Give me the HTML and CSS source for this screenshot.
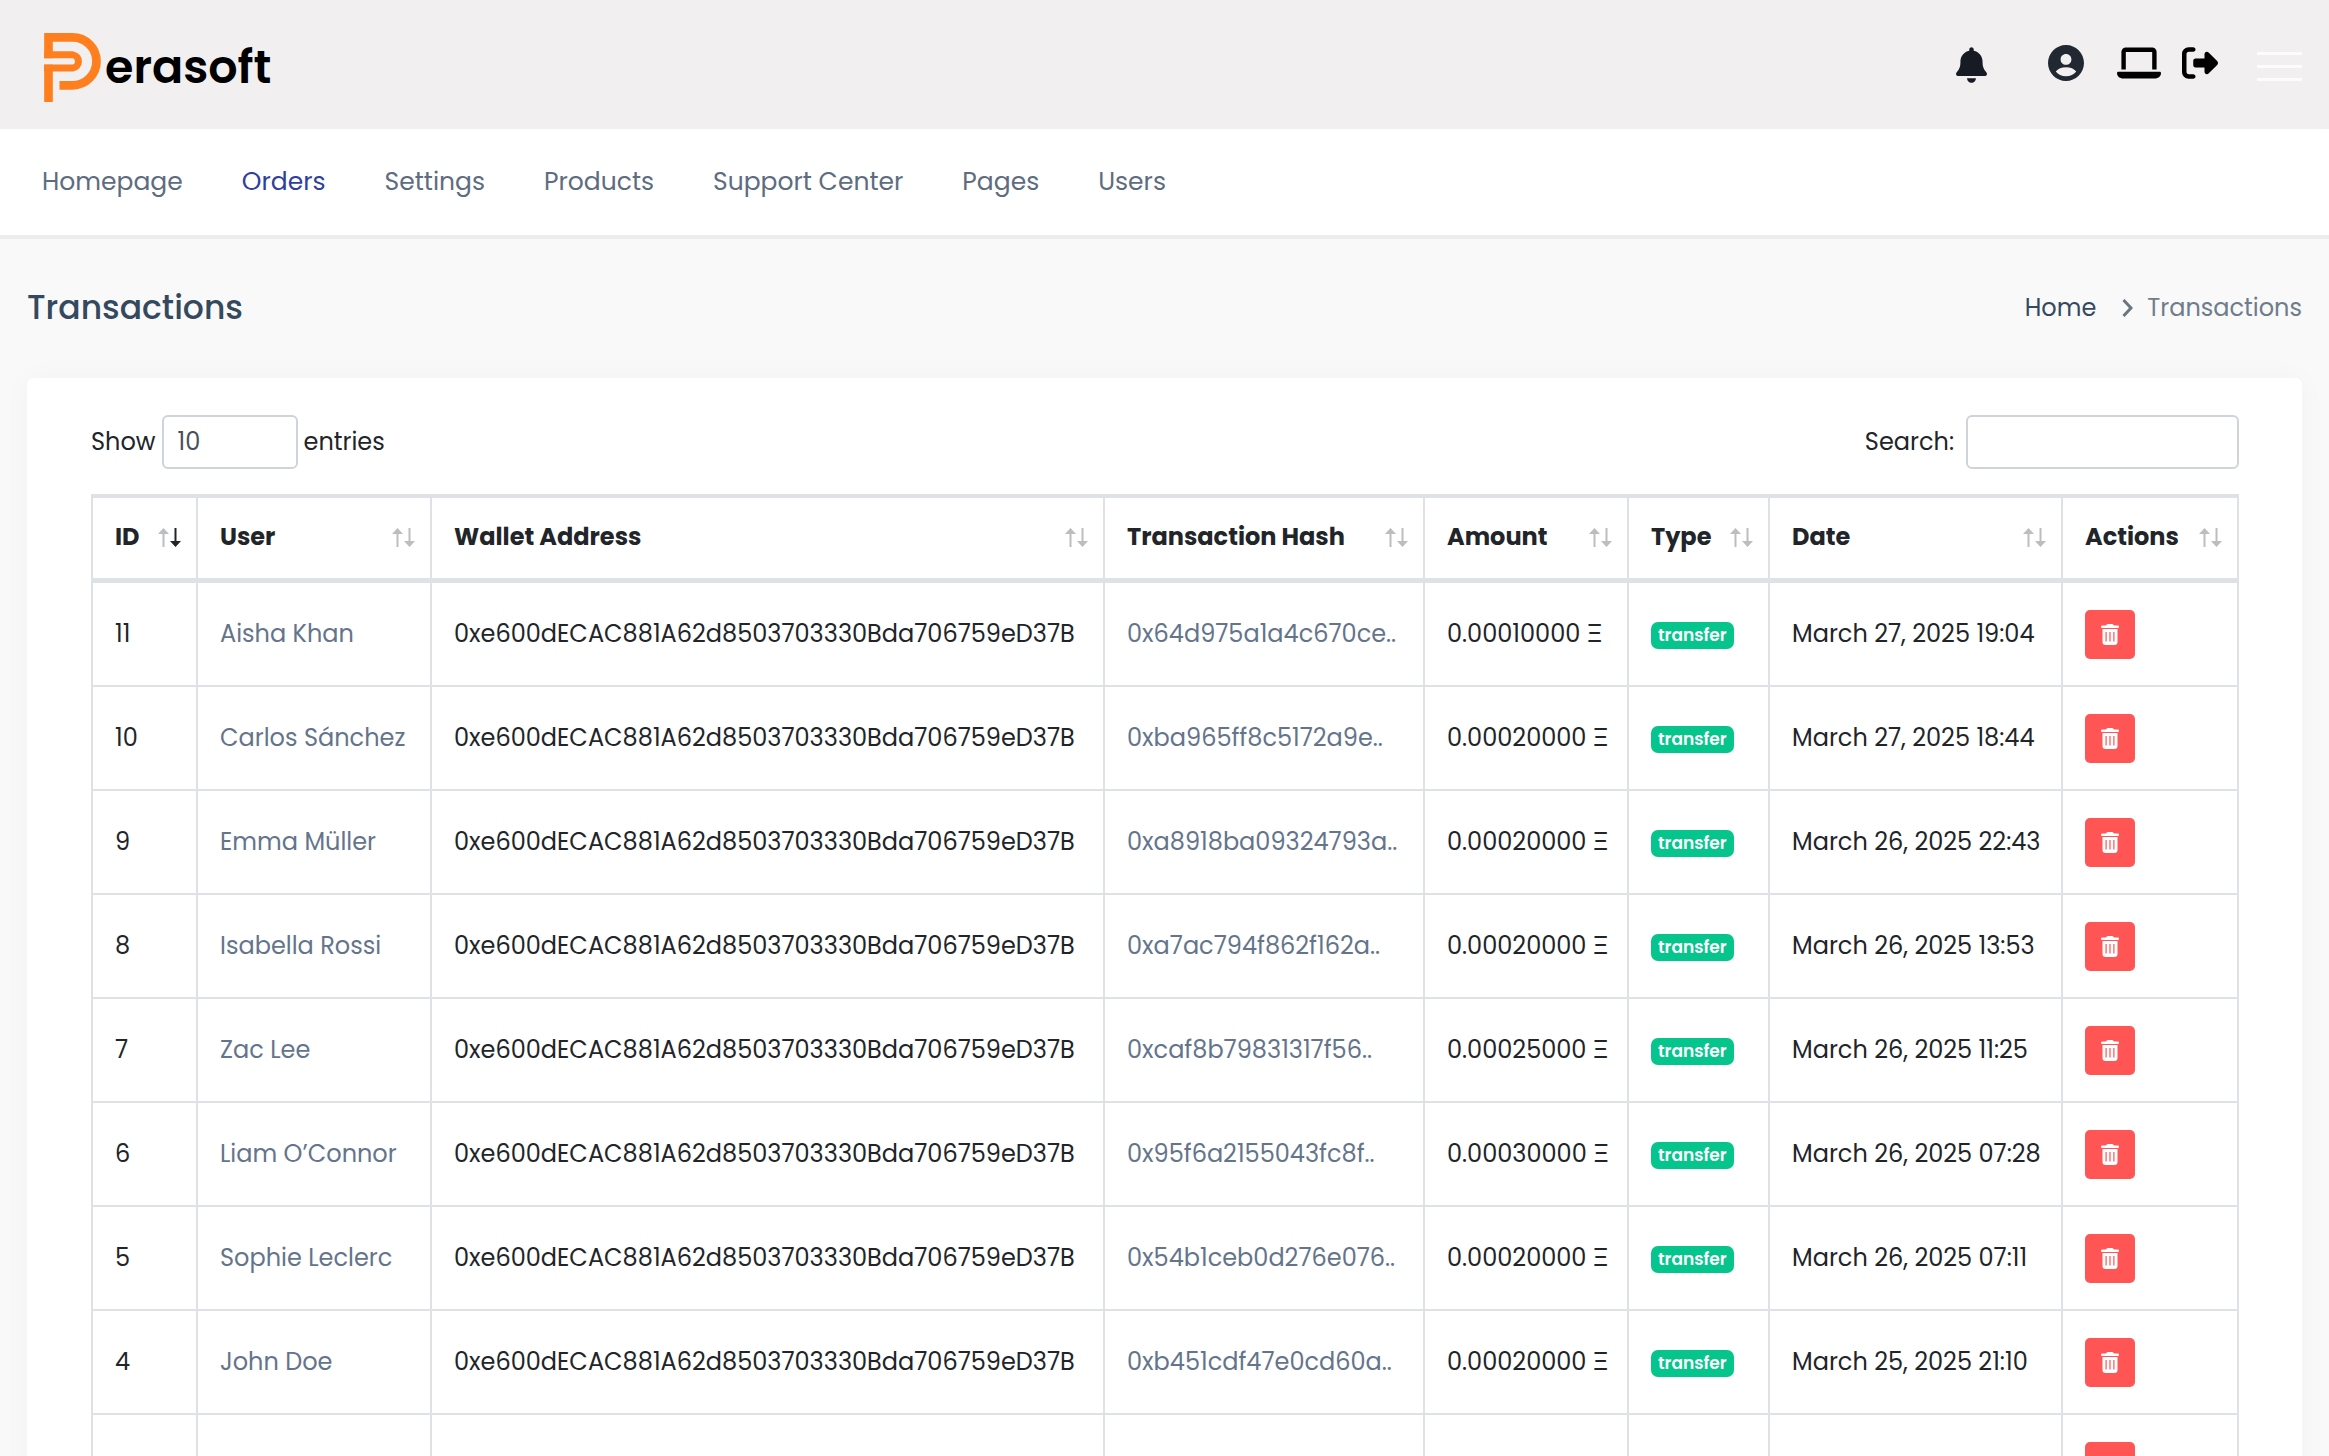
FILE: index.html
```html
<!DOCTYPE html>
<html lang="en">
<head>
<meta charset="utf-8">
<meta name="viewport" content="width=device-width, initial-scale=1">
<title>Transactions - Perasoft</title>
<link rel="stylesheet" href="styles.css">
</head>
<body>
<svg class="sprite" aria-hidden="true">
  <symbol id="trash" viewBox="0 0 18 21">
    <path fill-rule="evenodd" d="M5 1.500Q5.500 0 7 0H11Q12.500 0 13 1.500H17Q18 1.500 18 2.800T17 4H1Q0 4 0 2.800T1 1.500ZM1.500 5H16.500V18Q16.500 21 13.500 21H4.500Q1.500 21 1.500 18ZM4.500 8V17.500H5.700V8ZM8.400 8V17.500H9.600V8ZM12.300 8V17.500H13.500V8Z"/>
  </symbol>
  <symbol id="sort-up" viewBox="0 0 11 19"><path d="M5.500 0L11 6H6.500V19H4.500V6H0Z"/></symbol>
  <symbol id="sort-down" viewBox="0 0 11 19"><path d="M5.500 19L0 13H4.500V0H6.500V13H11Z"/></symbol>
</svg>

<header class="topbar">
  <a class="brand" href="#" aria-label="Perasoft">
    <svg class="brand-mark" viewBox="134 99 170 207" fill="none" stroke="#ff7f1e">
      <path stroke-width="26" d="M180 256H219A72 72 0 0 0 219 112H147V175"/>
      <path stroke-width="21" d="M134 164.500H220A20 20 0 0 1 220 204H134"/>
      <path stroke-width="26" d="M147 194V306"/>
    </svg>
    <span class="brand-text">erasoft</span>
  </a>
  <div class="tools">
    <button class="tool tool-bell" aria-label="Notifications"><svg width="31" height="36" viewBox="0 0 448 512"><path d="M224 0c-17.700 0-32 14.300-32 32l0 19.200C119 66 64 130.600 64 208l0 18.800c0 47-17.300 92.400-48.500 127.600l-7.400 8.300c-8.400 9.400-10.400 22.900-5.300 34.400S19.400 416 32 416l384 0c12.600 0 24-7.400 29.200-18.900s3.100-25-5.300-34.400l-7.400-8.300C401.300 319.200 384 273.900 384 226.800l0-18.800c0-77.400-55-142-128-156.800L256 32c0-17.700-14.300-32-32-32zm45.300 493.300c12-12 18.700-28.300 18.700-45.300l-128 0c0 17 6.700 33.300 18.700 45.300s28.300 18.700 45.300 18.700s33.300-6.700 45.300-18.700z"/></svg></button>
    <button class="tool tool-user" aria-label="Account"><svg width="36" height="36" viewBox="2 2 20 20"><path d="M12 2C6.579 2 2 6.579 2 12s4.579 10 10 10 10-4.579 10-10S17.421 2 12 2zm0 5c1.727 0 3 1.272 3 3s-1.273 3-3 3c-1.726 0-3-1.272-3-3s1.274-3 3-3zm-5.700 9.772c1.200-1.600 3.200-2.400 5.700-2.400s4.500.8 5.700 2.400C16.400 18.500 14.400 19.400 12 19.400s-4.400-.9-5.700-2.628z"/></svg></button>
    <a class="tool tool-site" href="#" aria-label="Website"><svg width="44" height="36" viewBox="0 0 640 512"><path d="M128 32C92.700 32 64 60.700 64 96V352h64V96H512V352h64V96c0-35.300-28.700-64-64-64H128zM19.200 384C8.600 384 0 392.600 0 403.200C0 445.600 34.400 480 76.800 480H563.200c42.400 0 76.800-34.400 76.800-76.800c0-10.600-8.600-19.200-19.200-19.200H19.200z"/></svg></a>
    <a class="tool tool-exit" href="#" aria-label="Log out"><svg width="36" height="36" viewBox="0 0 512 512"><path d="M377.900 105.900L500.700 228.700c7.200 7.200 11.300 17.100 11.300 27.300s-4.100 20.100-11.300 27.300L377.900 406.100c-6.400 6.400-15 9.900-24 9.900c-18.700 0-33.900-15.200-33.900-33.900l0-62.100-128 0c-17.700 0-32-14.300-32-32l0-64c0-17.700 14.300-32 32-32l128 0 0-62.100c0-18.700 15.200-33.900 33.900-33.900c9 0 17.600 3.600 24 9.900zM160 96L96 96c-17.700 0-32 14.300-32 32l0 256c0 17.700 14.300 32 32 32l64 0c17.700 0 32 14.300 32 32s-14.300 32-32 32l-64 0c-53 0-96-43-96-96L0 128C0 75 43 32 96 32l64 0c17.700 0 32 14.300 32 32s-14.300 32-32 32z"/></svg></a>
    <button class="tool burger" aria-label="Menu"><span></span><span></span><span></span></button>
  </div>
</header>

<nav class="mainnav">
  <a href="#">Homepage</a>
  <a class="active" href="#">Orders</a>
  <a href="#">Settings</a>
  <a href="#">Products</a>
  <a href="#">Support Center</a>
  <a href="#">Pages</a>
  <a href="#">Users</a>
</nav>

<main>
  <div class="page-head">
    <h1>Transactions</h1>
    <div class="crumbs">
      <a href="#">Home</a>
      <svg width="11" height="18" viewBox="0 0 11 18" fill="none" stroke="#6c757d" stroke-width="3"><path d="M1.500 1L9 9L1.500 17"/></svg>
      <span>Transactions</span>
    </div>
  </div>

  <section class="card">
    <div class="controls">
      <label class="length">Show
        <select><option>10</option><option>25</option><option>50</option><option>100</option></select>
        entries</label>
      <label class="search">Search: <input type="search"></label>
    </div>
    <table>
      <colgroup><col class="c-id"><col class="c-user"><col><col class="c-hash"><col class="c-amount"><col class="c-type"><col class="c-date"><col class="c-actions"></colgroup>
      <thead>
        <tr>
          <th><div>ID<span class="sort desc"><svg><use href="#sort-up"/></svg><svg><use href="#sort-down"/></svg></span></div></th>
          <th><div>User<span class="sort"><svg><use href="#sort-up"/></svg><svg><use href="#sort-down"/></svg></span></div></th>
          <th><div>Wallet Address<span class="sort"><svg><use href="#sort-up"/></svg><svg><use href="#sort-down"/></svg></span></div></th>
          <th><div>Transaction Hash<span class="sort"><svg><use href="#sort-up"/></svg><svg><use href="#sort-down"/></svg></span></div></th>
          <th><div>Amount<span class="sort"><svg><use href="#sort-up"/></svg><svg><use href="#sort-down"/></svg></span></div></th>
          <th><div>Type<span class="sort"><svg><use href="#sort-up"/></svg><svg><use href="#sort-down"/></svg></span></div></th>
          <th><div>Date<span class="sort"><svg><use href="#sort-up"/></svg><svg><use href="#sort-down"/></svg></span></div></th>
          <th><div>Actions<span class="sort"><svg><use href="#sort-up"/></svg><svg><use href="#sort-down"/></svg></span></div></th>
        </tr>
      </thead>
      <tbody>
        <tr><td>11</td><td><a href="#">Aisha Khan</a></td><td>0xe600dECAC881A62d8503703330Bda706759eD37B</td><td><a href="#">0x64d975a1a4c670ce..</a></td><td>0.00010000 Ξ</td><td><span class="badge">transfer</span></td><td>March 27, 2025 19:04</td><td><button class="delete" aria-label="Delete"><svg><use href="#trash"/></svg></button></td></tr>
        <tr><td>10</td><td><a href="#">Carlos Sánchez</a></td><td>0xe600dECAC881A62d8503703330Bda706759eD37B</td><td><a href="#">0xba965ff8c5172a9e..</a></td><td>0.00020000 Ξ</td><td><span class="badge">transfer</span></td><td>March 27, 2025 18:44</td><td><button class="delete" aria-label="Delete"><svg><use href="#trash"/></svg></button></td></tr>
        <tr><td>9</td><td><a href="#">Emma Müller</a></td><td>0xe600dECAC881A62d8503703330Bda706759eD37B</td><td><a href="#">0xa8918ba09324793a..</a></td><td>0.00020000 Ξ</td><td><span class="badge">transfer</span></td><td>March 26, 2025 22:43</td><td><button class="delete" aria-label="Delete"><svg><use href="#trash"/></svg></button></td></tr>
        <tr><td>8</td><td><a href="#">Isabella Rossi</a></td><td>0xe600dECAC881A62d8503703330Bda706759eD37B</td><td><a href="#">0xa7ac794f862f162a..</a></td><td>0.00020000 Ξ</td><td><span class="badge">transfer</span></td><td>March 26, 2025 13:53</td><td><button class="delete" aria-label="Delete"><svg><use href="#trash"/></svg></button></td></tr>
        <tr><td>7</td><td><a href="#">Zac Lee</a></td><td>0xe600dECAC881A62d8503703330Bda706759eD37B</td><td><a href="#">0xcaf8b79831317f56..</a></td><td>0.00025000 Ξ</td><td><span class="badge">transfer</span></td><td>March 26, 2025 11:25</td><td><button class="delete" aria-label="Delete"><svg><use href="#trash"/></svg></button></td></tr>
        <tr><td>6</td><td><a href="#">Liam O’Connor</a></td><td>0xe600dECAC881A62d8503703330Bda706759eD37B</td><td><a href="#">0x95f6a2155043fc8f..</a></td><td>0.00030000 Ξ</td><td><span class="badge">transfer</span></td><td>March 26, 2025 07:28</td><td><button class="delete" aria-label="Delete"><svg><use href="#trash"/></svg></button></td></tr>
        <tr><td>5</td><td><a href="#">Sophie Leclerc</a></td><td>0xe600dECAC881A62d8503703330Bda706759eD37B</td><td><a href="#">0x54b1ceb0d276e076..</a></td><td>0.00020000 Ξ</td><td><span class="badge">transfer</span></td><td>March 26, 2025 07:11</td><td><button class="delete" aria-label="Delete"><svg><use href="#trash"/></svg></button></td></tr>
        <tr><td>4</td><td><a href="#">John Doe</a></td><td>0xe600dECAC881A62d8503703330Bda706759eD37B</td><td><a href="#">0xb451cdf47e0cd60a..</a></td><td>0.00020000 Ξ</td><td><span class="badge">transfer</span></td><td>March 25, 2025 21:10</td><td><button class="delete" aria-label="Delete"><svg><use href="#trash"/></svg></button></td></tr>
        <tr><td></td><td></td><td></td><td></td><td></td><td></td><td></td><td><button class="delete" aria-label="Delete"><svg><use href="#trash"/></svg></button></td></tr>
      </tbody>
    </table>
  </section>
</main>
</body>
</html>
```
FILE: styles.css
```css
* { box-sizing: border-box; }

html { scrollbar-width: none; }

body {
  margin: 0;
  background: #f9f9f9;
  color: #212529;
  font-family: Poppins, Inter, sans-serif;
  font-size: 24px;
  line-height: 36px;
}

a { color: inherit; text-decoration: none; }
button { border: 0; padding: 0; background: none; cursor: pointer; }
svg { display: block; }
.sprite { display: none; }

/* Top bar */
.topbar {
  display: flex;
  justify-content: space-between;
  align-items: flex-start;
  min-height: 129px;
  padding: 33px 27px 20px 44px;
  background: #f1eff0;
}

.brand { display: flex; align-items: flex-start; gap: 4px; color: #000; }
.brand-mark { width: 57px; height: 69px; }
.brand-text { font-weight: 600; font-size: 46px; line-height: 69px; }

.tools { display: flex; align-items: flex-start; padding-top: 12px; }
.tool { display: block; fill: #000; }
.tool-bell { fill: #161b24; padding-top: 2px; margin-right: 61px; }
.tool-user { fill: #212832; margin-right: 33px; }
.tool-site { margin-right: 21px; }
.tool-exit { margin-right: 39px; }

.burger { display: flex; flex-direction: column; gap: 10px; width: 45px; padding-top: 7px; }
.burger span { width: 100%; height: 3px; background: #fcfcfc; }

/* Main navigation */
.mainnav {
  display: flex;
  gap: 59px;
  padding: 35px 42px;
  background: #fff;
  border-bottom: 4px solid #ececec;
  color: #5e6c7f;
  font-size: 25px;
}
.mainnav .active { color: #2f3f9e; }

/* Page heading */
main { padding: 0 27px 40px; }

.page-head {
  display: flex;
  justify-content: space-between;
  align-items: center;
  padding: 51px 0 52px;
}
h1 { margin: 0; color: #34495e; font-size: 33px; line-height: 36px; font-weight: 500; }

.crumbs { display: flex; align-items: center; color: #6f7c8b; }
.crumbs a { color: #34495e; margin-right: 26px; }
.crumbs svg { margin-right: 14px; }

/* Card */
.card {
  padding: 37px 63px 37px 64px;
  background: #fff;
  border-radius: 6px;
  box-shadow: 0 0 30px rgba(0, 0, 0, .03);
}

.controls { display: flex; justify-content: space-between; margin-bottom: 25px; }
.controls label { display: flex; align-items: center; }
.length { gap: 6px; }
.search { gap: 12px; }
select, input {
  appearance: none;
  height: 54px;
  margin: 0;
  padding: 0 14px;
  border: 2px solid #ced4da;
  border-radius: 6px;
  background: #fff;
  color: #495057;
  font: inherit;
}
select { width: 136px; }
input { width: 273px; }

/* Table */
table {
  width: 100%;
  table-layout: fixed;
  border-spacing: 0;
  border: solid #dee2e6;
  border-width: 4px 0 0 2px;
}
.c-id { width: 105px; }
.c-user { width: 234px; }
.c-hash { width: 320px; }
.c-amount { width: 204px; }
.c-type { width: 141px; }
.c-date { width: 293px; }
.c-actions { width: 176px; }

th, td {
  padding: 0 0 0 22px;
  border: solid #dee2e6;
  border-width: 0 2px 2px 0;
  text-align: left;
  white-space: nowrap;
}
th { height: 85px; padding: 0 15px 2px 22px; border-bottom-width: 5px; font-weight: 700; }
td { height: 104px; }
th div { display: flex; align-items: center; justify-content: space-between; }
td a { color: #64748b; }

.sort { display: flex; gap: 1px; fill: #bcbdbf; }
.sort svg { width: 11px; height: 19px; }
.desc svg:last-child { fill: #212529; }

.badge {
  display: block;
  width: fit-content;
  padding: 0 7px;
  margin-top: 3px;
  border-radius: 7px;
  background: #05c48c;
  color: #fff;
  font-size: 17px;
  font-weight: 600;
  line-height: 27px;
}

.delete {
  display: grid;
  place-items: center;
  width: 50px;
  height: 49px;
  border-radius: 5px;
  background: #ff5555;
  fill: #fff;
}
.delete svg { width: 18px; height: 21px; }
```
